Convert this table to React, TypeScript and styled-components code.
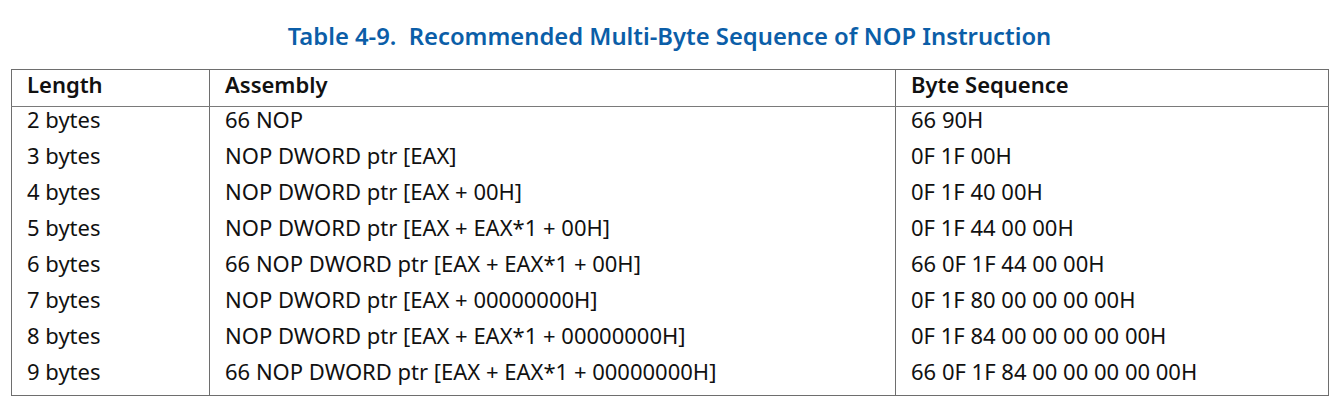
import React from 'react'
import styled, { createGlobalStyle } from 'styled-components'

interface NopRow {
  length: string
  assembly: string
  bytes: string
}

const rows: NopRow[] = [
  { length: '2 bytes', assembly: '66 NOP', bytes: '66 90H' },
  { length: '3 bytes', assembly: 'NOP DWORD ptr [EAX]', bytes: '0F 1F 00H' },
  { length: '4 bytes', assembly: 'NOP DWORD ptr [EAX + 00H]', bytes: '0F 1F 40 00H' },
  { length: '5 bytes', assembly: 'NOP DWORD ptr [EAX + EAX*1 + 00H]', bytes: '0F 1F 44 00 00H' },
  { length: '6 bytes', assembly: '66 NOP DWORD ptr [EAX + EAX*1 + 00H]', bytes: '66 0F 1F 44 00 00H' },
  { length: '7 bytes', assembly: 'NOP DWORD ptr [EAX + 00000000H]', bytes: '0F 1F 80 00 00 00 00H' },
  { length: '8 bytes', assembly: 'NOP DWORD ptr [EAX + EAX*1 + 00000000H]', bytes: '0F 1F 84 00 00 00 00 00H' },
  { length: '9 bytes', assembly: '66 NOP DWORD ptr [EAX + EAX*1 + 00000000H]', bytes: '66 0F 1F 84 00 00 00 00 00H' },
]

const GlobalStyle = createGlobalStyle`
  body {
    margin: 0;
    background: #ffffff;
    font-family: 'Noto Sans', 'DejaVu Sans', sans-serif;
  }
`

const Page = styled.div`
  padding: 19px 14px 0 11px;
`

const Caption = styled.div`
  text-align: center;
  color: #0b5ea8;
  font-size: 23.8px;
  font-weight: 600;
  line-height: 34px;
  margin-bottom: 16px;
`

const Table = styled.table`
  width: 1317px;
  border-collapse: collapse;
  table-layout: fixed;
  border: 1.5px solid #6e6e6e;
  color: #111;
`

const HeadCell = styled.th<{ $width: number }>`
  width: ${(p) => p.$width}px;
  height: 36px;
  padding: 0 0 7px 15px;
  text-align: left;
  vertical-align: top;
  font-size: 22px;
  font-weight: 600;
  line-height: 29px;
  border-left: 1.5px solid #6e6e6e;
  border-bottom: 1.5px solid #7a7a7a;
  box-sizing: border-box;
`

const Cell = styled.td`
  height: 36px;
  padding: 0 0 12px 15px;
  vertical-align: top;
  font-size: 22px;
  line-height: 24px;
  border-left: 1.5px solid #6e6e6e;
  white-space: nowrap;
  box-sizing: border-box;
`

const App: React.FC = () => {
  return (
    <Page>
      <GlobalStyle />
      <Caption>Table 4-9.&nbsp; Recommended Multi-Byte Sequence of NOP Instruction</Caption>
      <Table>
        <thead>
          <tr>
            <HeadCell $width={198}>Length</HeadCell>
            <HeadCell $width={686}>Assembly</HeadCell>
            <HeadCell $width={433}>Byte Sequence</HeadCell>
          </tr>
        </thead>
        <tbody>
          {rows.map((row) => (
            <tr key={row.length}>
              <Cell>{row.length}</Cell>
              <Cell>{row.assembly}</Cell>
              <Cell>{row.bytes}</Cell>
            </tr>
          ))}
        </tbody>
      </Table>
    </Page>
  )
}

export default App
